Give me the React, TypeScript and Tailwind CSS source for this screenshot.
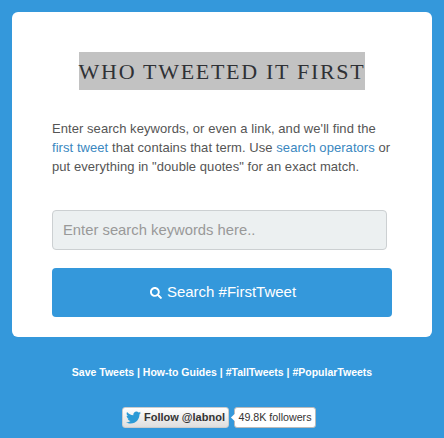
import { FaSearch, FaTwitter } from "react-icons/fa"

export default function App() {
  return (
    <div className="h-[438px] overflow-hidden bg-[#3498db] px-3 pt-3 font-['Liberation_Sans',Arial,sans-serif]">
      <div className="h-[325px] rounded-md bg-white px-10 pt-10">
        <div className="flex justify-center">
          <h1 className="bg-[#c2c2c2] pt-[9px] pb-[8px] font-['Liberation_Serif',serif] text-[22px] leading-[21px] tracking-[1.7px] text-[#2f3135]">
            WHO TWEETED IT FIRST
          </h1>
        </div>

        <p className="mt-[29px] w-[345px] text-[13px] leading-[19px] tracking-[0.06px] text-[#555555]">
          Enter search keywords, or even a link, and we'll find the{" "}
          <a className="text-[#3a87c0]">first tweet</a> that contains that term. Use{" "}
          <a className="text-[#3a87c0]">search operators</a> or put everything in "double quotes" for an exact match.
        </p>

        <div className="mt-[34px] flex h-10 w-[335px] items-center rounded border border-[#ccd0d2] bg-[#ecf0f1] px-[10px] text-[14.8px] text-[#999999]">
          Enter search keywords here..
        </div>

        <button className="mt-[18px] flex h-[49px] w-[340px] items-center justify-center gap-[5px] rounded bg-[#3498db] pl-[2px] text-[15px] text-white">
          <FaSearch className="h-3 w-3" />
          Search #FirstTweet
        </button>
      </div>

      <div className="mt-[28px] text-center text-[10.5px] leading-[14px] font-bold text-white">
        Save Tweets | How-to Guides | #TallTweets | #PopularTweets
      </div>

      <div className="mt-[28px] flex items-center justify-center gap-[5px] pr-[6px] text-[10.7px]">
        <div className="flex h-[21px] w-[107px] items-center gap-[3px] rounded-[3px] border border-[#cccccc] bg-gradient-to-b from-white to-[#dedede] pl-[3px] text-[11px] font-bold text-[#333333]">
          <FaTwitter className="h-[15px] w-[15px] text-[#2b9ad6]" />
          Follow @labnol
        </div>
        <div className="relative flex h-[21px] items-center rounded-[3px] border border-[#bbbbbb] bg-white px-[3.5px] text-[#333333]">
          <span className="absolute -left-[3px] top-[7px] h-[5px] w-[5px] rotate-45 bg-white" />
          49.8K followers
        </div>
      </div>
    </div>
  )
}
